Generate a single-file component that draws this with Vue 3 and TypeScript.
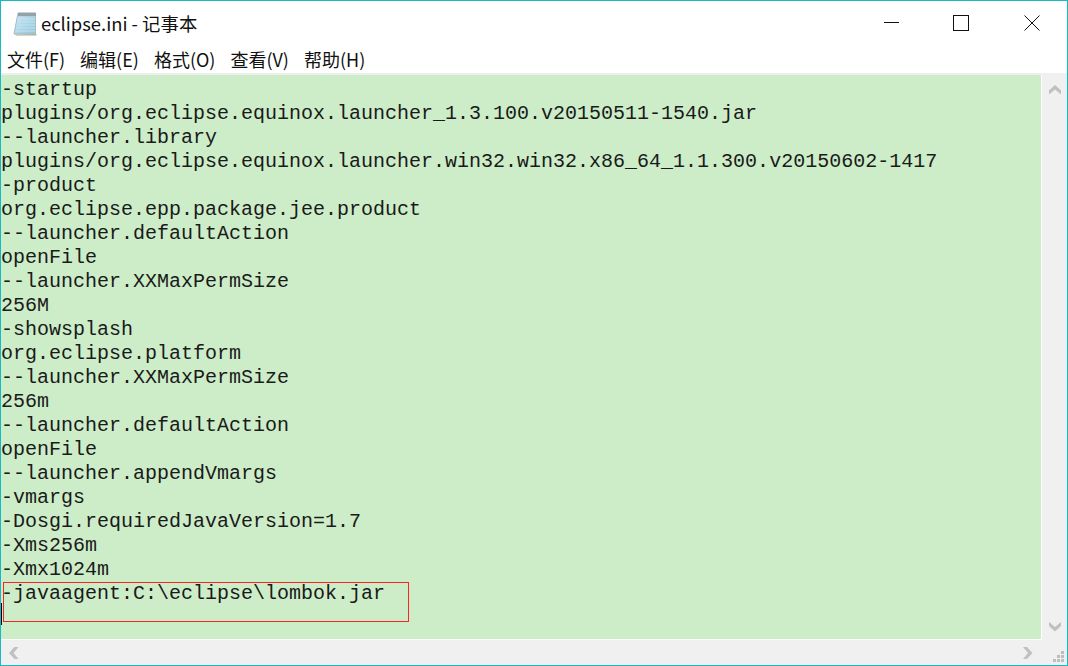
<script setup lang="ts">
const menus: string[] = ['文件(F)', '编辑(E)', '格式(O)', '查看(V)', '帮助(H)']
const text = `-startup
plugins/org.eclipse.equinox.launcher_1.3.100.v20150511-1540.jar
--launcher.library
plugins/org.eclipse.equinox.launcher.win32.win32.x86_64_1.1.300.v20150602-1417
-product
org.eclipse.epp.package.jee.product
--launcher.defaultAction
openFile
--launcher.XXMaxPermSize
256M
-showsplash
org.eclipse.platform
--launcher.XXMaxPermSize
256m
--launcher.defaultAction
openFile
--launcher.appendVmargs
-vmargs
-Dosgi.requiredJavaVersion=1.7
-Xms256m
-Xmx1024m
-javaagent:C:\\eclipse\\lombok.jar`
</script>

<template>
  <div class="window">
    <header class="titlebar">
      <svg class="appicon" width="26" height="26" viewBox="0 0 26 26">
        <defs>
          <linearGradient id="pad" x1="0" y1="0" x2="1" y2="1">
            <stop offset="0" stop-color="#d5edf6" />
            <stop offset="0.6" stop-color="#a6d3e6" />
            <stop offset="1" stop-color="#8fc4dc" />
          </linearGradient>
        </defs>
        <path d="M2 24.5 L3 25.5 H23.5 V24 Z" fill="#b8ab8c" />
        <path d="M5 3 H22.5 V24 H1 Z" fill="url(#pad)" stroke="#a8bcc6" stroke-width="1" />
        <path d="M4.5 9 H22 M4 12 H22 M3.5 15 H22 M3 18 H22 M2.5 21 H22" stroke="#c4e3ef" stroke-width="1" />
        <path d="M5 2.5 H22.5 V6.5 H4.5 Z" fill="#b9c6cc" />
        <path d="M6 3 V6 M8 3 V6 M10 3 V6 M12 3 V6 M14 3 V6 M16 3 V6 M18 3 V6 M20 3 V6 M22 3 V6" stroke="#6f7f87" stroke-width="1" />
      </svg>
      <span class="title">eclipse.ini - 记事本</span>
      <div class="controls">
        <span class="ctl"><i class="min"></i></span>
        <span class="ctl"><i class="max"></i></span>
        <span class="ctl">
          <svg width="16" height="16" viewBox="0 0 16 16"><path d="M.5 .5 L15.5 15.5 M15.5 .5 L.5 15.5" stroke="#111" stroke-width="1" fill="none" /></svg>
        </span>
      </div>
    </header>
    <nav class="menubar">
      <span v-for="m in menus" :key="m" class="menu">{{ m }}</span>
    </nav>
    <div class="client">
      <div class="editor">
        <pre class="text">{{ text }}</pre>
        <i class="caret"></i>
        <div class="mark"></div>
      </div>
      <div class="vbar">
        <svg width="12" height="10" viewBox="0 0 12 10"><path d="M0 5.5 L6 0 L12 5.5 L12 9.5 L6 4.5 L0 9.5 Z" fill="#c0c0c0" /></svg>
        <svg width="12" height="10" viewBox="0 0 12 10"><path d="M0 0 L6 5 L12 0 L12 4 L6 9.5 L0 4 Z" fill="#c0c0c0" /></svg>
      </div>
      <div class="hbar">
        <svg width="10" height="12" viewBox="0 0 10 12"><path d="M5.5 0 L0 6 L5.5 12 L9.5 12 L4.5 6 L9.5 0 Z" fill="#c0c0c0" /></svg>
        <svg width="10" height="12" viewBox="0 0 10 12"><path d="M0 0 L5 6 L0 12 L4 12 L9.5 6 L4 0 Z" fill="#c0c0c0" /></svg>
      </div>
      <div class="corner">
        <svg width="12" height="12" viewBox="0 0 12 12" fill="#bdbdbd">
          <rect x="8" y="0" width="3" height="3" /><rect x="4" y="4" width="3" height="3" /><rect x="8" y="4" width="3" height="3" />
          <rect x="0" y="8" width="3" height="3" /><rect x="4" y="8" width="3" height="3" /><rect x="8" y="8" width="3" height="3" />
        </svg>
      </div>
    </div>
  </div>
</template>

<style>
html, body { margin: 0; background: #fff; }
</style>

<style scoped>
.window {
  width: 1068px;
  height: 666px;
  box-sizing: border-box;
  border: 1px solid #17b9c6;
  display: flex;
  flex-direction: column;
  background: #fff;
  overflow: hidden;
  font-family: "Noto Sans CJK SC", "Noto Sans", sans-serif;
  color: #111;
}
.titlebar {
  height: 43px;
  display: flex;
  align-items: center;
  padding-left: 12px;
  flex: none;
}
.appicon { margin-right: 2px; }
.title { font-size: 18.4px; }
.controls { margin-left: auto; display: flex; height: 100%; }
.ctl {
  width: 71px;
  display: flex;
  align-items: center;
  justify-content: center;
}
.min { display: block; width: 15px; height: 1px; background: #111; margin-left: 4px; }
.max { display: block; width: 14px; height: 14px; border: 1px solid #111; }
.menubar {
  height: 29px;
  display: flex;
  align-items: center;
  gap: 15px;
  padding-left: 6px;
  font-size: 18px;
  flex: none;
  border-bottom: 2px solid #efefef;
}
.client {
  flex: 1;
  display: grid;
  grid-template-columns: 1fr 25px;
  grid-template-rows: 1fr 25px;
  background: #f0f0f0;
  min-height: 0;
}
.editor {
  position: relative;
  background: #cdedc8;
  overflow: hidden;
  border-right: 1px solid #fff;
  border-bottom: 1px solid #fff;
}
.text {
  margin: 0;
  padding-top: 3px;
  font-family: "Liberation Mono", monospace;
  font-size: 20px;
  line-height: 24px;
  color: #1a1a1a;
}
.caret { position: absolute; left: 0; top: 528px; width: 1px; height: 22px; background: #000; }
.mark {
  position: absolute;
  left: 2px;
  top: 507px;
  width: 404px;
  height: 38px;
  border: 1px solid #f22;
}
.vbar {
  display: flex;
  flex-direction: column;
  justify-content: space-between;
  align-items: center;
  padding: 10px 0 8px;
}
.hbar {
  display: flex;
  justify-content: space-between;
  align-items: center;
  padding: 0 9px 0 8px;
}
.corner {
  display: flex;
  align-items: flex-end;
  justify-content: flex-end;
  padding: 0 2px 2px 0;
}
</style>
